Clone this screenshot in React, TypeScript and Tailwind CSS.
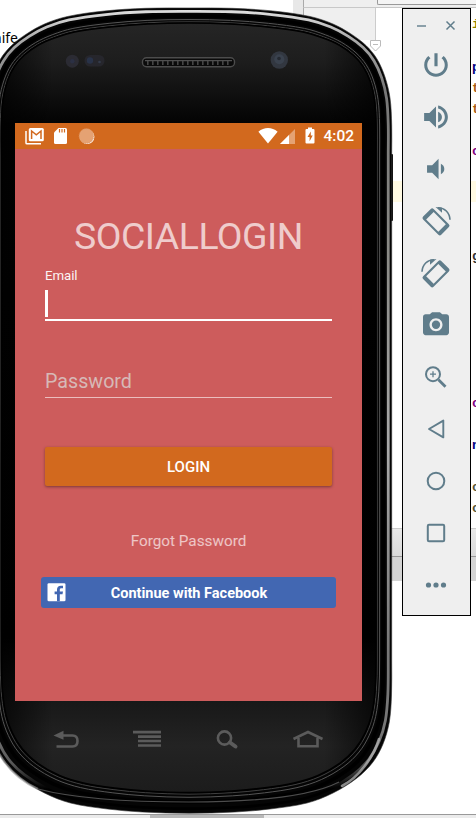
import React from "react";

type Pt = [number, number];

/* Right half of the case outline, from top centre to bottom centre. */
const OUTER: Pt[] = [
  [189, 8], [232, 8.3], [273, 11], [310, 16.5], [333, 24], [351, 34], [366, 45.5], [377, 59], [385, 77], [390, 98], [391.7, 125], [391.7, 155],
  [391.7, 400], [391.7, 660], [391.5, 695], [389.3, 722], [383, 744], [373, 762], [357, 778], [333, 793], [307, 803], [270, 809], [235, 812], [189, 813.3],
];
const INNER: Pt[] = [
  [189, 23], [230, 24], [267, 27], [303, 32], [323, 38], [339, 45], [353, 55], [363, 66.5], [370, 81], [374.5, 100], [376, 125], [376, 155],
  [376, 400], [376, 660], [375, 691], [371.5, 715], [365, 733], [355, 749], [340, 763], [318, 775.5], [294, 783], [263, 788], [232, 791], [189, 792.5],
];

/* Closed outline between the outer edge (t = 0) and the glass (t = 1). */
function ring(t: number) {
  const right: Pt[] = OUTER.map(([x, y], i) => [x + (INNER[i][0] - x) * t, y + (INNER[i][1] - y) * t]);
  const left: Pt[] = right.slice(1, -1).reverse().map(([x, y]) => [377.5 - x, y]);
  const p = [...right, ...left];
  const n = p.length;
  let d = `M${p[0][0]} ${p[0][1]}`;
  for (let i = 0; i < n; i++) {
    const a = p[(i + n - 1) % n], b = p[i], c = p[(i + 1) % n], e = p[(i + 2) % n];
    const len = Math.hypot(c[0] - b[0], c[1] - b[1]);
    const l1 = Math.hypot(c[0] - a[0], c[1] - a[1]);
    const l2 = Math.hypot(e[0] - b[0], e[1] - b[1]);
    const k = len / 3;
    d += `C${b[0] + ((c[0] - a[0]) / l1) * k} ${b[1] + ((c[1] - a[1]) / l1) * k} ${c[0] - ((e[0] - b[0]) / l2) * k} ${c[1] - ((e[1] - b[1]) / l2) * k} ${c[0]} ${c[1]}`;
  }
  return d + "Z";
}

function CaseArt() {
  return (
    <svg className="absolute left-0 top-0" width="396" height="818" viewBox="0 0 396 818" fill="none">
      <defs>
        <linearGradient id="face" x1="0" y1="24" x2="0" y2="792" gradientUnits="userSpaceOnUse">
          <stop offset="0" stopColor="#252525" /><stop offset=".05" stopColor="#1d1d1d" /><stop offset=".13" stopColor="#030303" />
          <stop offset=".8" stopColor="#000" /><stop offset=".88" stopColor="#181818" /><stop offset=".94" stopColor="#232323" /><stop offset="1" stopColor="#1c1c1c" />
        </linearGradient>
        <linearGradient id="rim" x1="0" y1="8" x2="0" y2="813" gradientUnits="userSpaceOnUse">
          <stop offset="0" stopColor="#e2e2e2" /><stop offset=".04" stopColor="#aaa" /><stop offset=".1" stopColor="#777" /><stop offset=".3" stopColor="#8a8a86" />
          <stop offset=".55" stopColor="#aaa" /><stop offset=".8" stopColor="#777" /><stop offset=".9" stopColor="#777" /><stop offset=".94" stopColor="#555" /><stop offset=".97" stopColor="#000" />
        </linearGradient>
        <linearGradient id="edge" x1="0" y1="0" x2="377" y2="0" gradientUnits="userSpaceOnUse">
          <stop offset="0" stopColor="#000" stopOpacity=".7" /><stop offset=".14" stopColor="#000" stopOpacity="0" /><stop offset=".86" stopColor="#000" stopOpacity="0" /><stop offset="1" stopColor="#000" stopOpacity=".7" />
        </linearGradient>
      </defs>
      <rect x="389" y="154" width="4" height="67" rx="1" fill="#111" />
      <path d={ring(0)} fill="#050505" stroke="#333" strokeWidth=".6" />
      <path d={ring(0.22)} stroke="url(#rim)" strokeWidth="2.8" />
      <path d={ring(0.54)} stroke="#000" strokeWidth="3.5" />
      <path d={ring(0.77)} stroke="#555" strokeWidth="1" />
      <path d={ring(0.92)} stroke="#404040" strokeWidth="1" />
      <path d={ring(1)} fill="url(#face)" stroke="#000" strokeWidth="1.5" />
      <path d={ring(1)} fill="url(#edge)" />
      <path d="M38 789C80 800 140 802 189 802C250 802 310 797 339 782" stroke="#808080" strokeWidth="1.2" opacity=".6" />
      <path d="M342 786C359 777 373 758 379 739" stroke="#b5b5b5" strokeWidth="2.6" strokeLinecap="round" opacity=".75" />
      <path d="M-4 748C5 766 18 780 38 789" stroke="#a0a0a0" strokeWidth="2.2" opacity=".65" />
      <circle cx="72.3" cy="61.2" r="6.5" fill="#2b2b33" />
      <circle cx="72.3" cy="61.2" r="2.2" fill="#2b3044" />
      <rect x="84.5" y="55" width="20" height="11.5" rx="5.5" fill="#26262c" />
      <circle cx="90" cy="60.5" r="3.2" fill="#283248" />
      <circle cx="99.5" cy="62" r="1.3" fill="#333a4a" />
      <rect x="142.5" y="57.8" width="92" height="9" rx="4" fill="#0a0a0a" stroke="#4c4c4c" strokeWidth="1.4" />
      <path d="M145 60.6H232" stroke="#505050" strokeWidth="1.4" />
      <path d="M147 63H231" stroke="#454545" strokeWidth="4" strokeDasharray="1.6 3.4" />
      <circle cx="279.3" cy="60" r="8.7" fill="#323740" />
      <circle cx="279.3" cy="59.3" r="5" fill="#3a424e" />
      <circle cx="279" cy="58.5" r="1.8" fill="#252a32" />
    </svg>
  );
}

function StatusBar() {
  return (
    <div className="flex h-[26px] items-center bg-[#d2691e] pl-[10px] pr-[8px] text-white">
      <svg width="20" height="18" viewBox="0 0 20 18" fill="none">
        <path d="M1 4V15.9Q1 16.7 2 16.7H16" stroke="#fff" strokeWidth="1.5" />
        <rect x="3.8" y="1" width="15" height="13.3" rx="1.5" fill="#fff" />
        <path d="M6.6 12V4L11.3 7.8L16 4V12" stroke="#d2691e" strokeWidth="1.5" />
      </svg>
      <svg className="ml-[9px]" width="14" height="18" viewBox="0 0 14 18">
        <path d="M4.5 1H11.5Q13 1 13 2.5V15.5Q13 17 11.5 17H1.5Q0 17 0 15.5V5.5Z" fill="#fff" />
        <path d="M5.5 2V5.5M8 2V5.5M10.5 2V5.5" stroke="#d2691e" strokeWidth="1.2" />
      </svg>
      <svg className="ml-[10px]" width="18" height="18" viewBox="0 0 18 18">
        <circle cx="9.2" cy="9.8" r="7.2" fill="#fff" />
        <circle cx="8.4" cy="9" r="7.4" fill="#e5a273" stroke="#d88c55" strokeWidth=".7" strokeDasharray="1 1" />
      </svg>
      <svg className="ml-auto" width="20" height="18" viewBox="0 0 20 18">
        <path d="M.4 4.7C6-.1 14-.1 19.6 4.7L10 16.5Z" fill="#fff" />
      </svg>
      <svg className="ml-[1px]" width="17" height="18" viewBox="0 0 17 18">
        <path d="M1 17L16 2V17Z" fill="#e5a273" />
        <path d="M1 17L10 8V17Z" fill="#fff" />
      </svg>
      <svg className="ml-[9px]" width="10" height="18" viewBox="0 0 10 18">
        <path d="M3 .5H7V2H8.3Q9.5 2 9.5 3V15.5Q9.5 16.5 8.5 16.5H1.5Q.5 16.5 .5 15.5V3Q.5 2 1.7 2H3Z" fill="#fff" />
        <path d="M5.8 4.5L2.5 10H4.6V14.2L7.7 8.5H5.8Z" fill="#d2691e" />
      </svg>
      <span className="ml-[8px] pt-[2px] text-[15.5px] font-medium leading-none">4:02</span>
    </div>
  );
}

function Screen() {
  return (
    <div className="relative ml-[15px] mt-[123px] flex h-[578px] w-[347px] flex-col bg-[#cd5c5c]">
      <StatusBar />
      <div className="flex flex-col px-[30px] pt-[65px]">
        <h1 className="text-center text-[37.4px] leading-[44px] tracking-[-0.5px] text-white/70">SOCIALLOGIN</h1>
        <label className="mt-[10px] text-[13.3px] leading-4 tracking-[-0.1px] text-white/95">Email</label>
        <div className="mt-[6px] h-[31px] border-b-2 border-white">
          <div className="h-[27px] w-[2.5px] bg-white" />
        </div>
        <div className="mt-[47px] h-[30px] border-b border-white/60 text-[19.7px] leading-[27px] text-[#d7b9b7]">Password</div>
        <button className="mt-[49px] h-[39px] rounded-[2px] bg-[#d2691e] pt-[2px] text-[15px] font-medium text-white shadow-[0_1px_3px_rgba(0,0,0,0.4)]">LOGIN</button>
        <div className="mt-[44px] text-center text-[15.3px] leading-[22px] text-white/65">Forgot Password</div>
        <button className="-mx-1 mt-[25px] flex h-[31px] items-center rounded-[3px] bg-[#4267b2] pl-[6px] text-[14.5px] font-bold text-white">
          <svg width="19" height="19" viewBox="0 0 19 19">
            <rect x=".5" y=".2" width="18" height="18" rx="1.3" fill="#fff" />
            <path d="M10 18.2V11.2H7.6V8.4H10V6.5C10 4 11.5 2.7 13.7 2.7H16V5.3H14.4C13.2 5.3 12.8 5.9 12.8 6.9V8.4H16L15.5 11.2H12.8V18.2Z" fill="#4267b2" />
          </svg>
          <span className="flex-1 pr-[24px] pt-[2px] text-center">Continue with Facebook</span>
        </button>
      </div>
    </div>
  );
}

function HardwareKeys() {
  return (
    <div className="relative ml-[52px] mt-[28px] flex w-[272px] items-center justify-between text-[#5b5b5b]">
      <svg width="28" height="22" viewBox="0 0 28 22" fill="none" stroke="currentColor" strokeWidth="2.6">
        <path d="M10 6.5H20.5Q25.5 6.5 25.5 12T20.5 17.5H4.5" /><path d="M1.5 6.5L11.5 1.8V10.8Z" fill="currentColor" stroke="none" />
      </svg>
      <svg width="30" height="22" viewBox="0 0 30 22" fill="none" stroke="currentColor" strokeWidth="2.6">
        <path d="M0 3.1H28M5 7.6H28M5 12H28M5 16.5H28" />
      </svg>
      <svg width="24" height="22" viewBox="0 0 24 22" fill="none" stroke="currentColor">
        <circle cx="9.5" cy="9" r="6.6" strokeWidth="2.6" /><path d="M15 13.5L20.5 17.5" strokeWidth="4" strokeLinecap="round" />
      </svg>
      <svg width="32" height="22" viewBox="0 0 32 22" fill="none" stroke="currentColor" strokeWidth="2.6">
        <path d="M1.5 10L16 3L30.5 10" /><path d="M6.5 9V17.3H25.5V9" />
      </svg>
    </div>
  );
}

function Emulator() {
  return (
    <div className="absolute left-0 top-0 flex h-[818px] w-[396px] flex-col">
      <CaseArt />
      <Screen />
      <HardwareKeys />
    </div>
  );
}

function RotateArt() {
  return (
    <g>
      <path transform="translate(0 .8) rotate(45)" fillRule="evenodd" d="M-10.8 -7.4H10.8Q12.8 -7.4 12.8 -5.4V5.4Q12.8 7.4 10.8 7.4H-10.8Q-12.8 7.4 -12.8 5.4V-5.4Q-12.8 -7.4 -10.8 -7.4ZM-8.6 -5.3V5.3H8.6V-5.3Z" />
      <path d="M2 -13.3C8.5 -13.5 13.7 -8.2 14 -1.2" fill="none" stroke="currentColor" strokeWidth="1.6" />
      <path d="M-.5 -14L6 -13.2L6 -8.2Z" />
    </g>
  );
}

const TOOLS: { name: string; art: React.ReactNode }[] = [
  { name: "Power", art: <g transform="scale(1.31) translate(-12 -12)"><path d="M13.2 3h-2.4v10h2.4V3zm4.63 2.17-1.6 1.6C17.8 8 18.7 9.81 18.7 12c0 3.7-3 6.7-6.7 6.7s-6.7-3-6.7-6.7c0-2.19.95-4 2.48-5.22L6.17 5.17C4.23 6.82 3 9.26 3 12c0 4.97 4.03 9 9 9s9-4.03 9-9c0-2.74-1.23-5.18-3.17-6.83z" /></g> },
  { name: "Volume up", art: <g transform="scale(1.32) translate(-12 -12)"><path d="M3 9v6h4l5 5V4L7 9H3zm13.5 3c0-1.77-1.02-3.29-2.9-4.03v8.05c1.88-.73 2.9-2.25 2.9-4.02zM13.6 3.23v2.4c2.89.7 5.1 3.2 5.1 6.37s-2.21 5.67-5.1 6.37v2.4c4.21-.91 7.4-4.49 7.4-8.77s-3.19-7.86-7.4-8.77z" /></g> },
  { name: "Volume down", art: <g transform="scale(1.28) translate(-12 -12)"><path d="M18.5 12c0-1.77-1.02-3.29-2.7-4.03v8.05c1.68-.73 2.7-2.25 2.7-4.02zM5 9v6h4l5 5V4L9 9H5z" /></g> },
  { name: "Rotate left", art: <RotateArt /> },
  { name: "Rotate right", art: <g transform="scale(-1 1)"><RotateArt /></g> },
  { name: "Screenshot", art: <g transform="scale(1.3) translate(-12 -12.2)"><path fillRule="evenodd" d="M9 2.4L7.17 4H4c-1.1 0-2 .9-2 2v12c0 1.1.9 2 2 2h16c1.1 0 2-.9 2-2V6c0-1.1-.9-2-2-2h-3.17L15 2.4H9zm3 14.6c-2.76 0-5-2.24-5-5s2.24-5 5-5 5 2.24 5 5-2.24 5-5 5z" /><circle cx="12" cy="12" r="3.2" /></g> },
  { name: "Zoom", art: <g fill="none" stroke="currentColor"><circle cx="-3" cy="-2.8" r="7" strokeWidth="2" /><path d="M2.5 2.7L9.5 9.7" strokeWidth="2.8" /><path d="M-6 -2.8H0M-3 -5.8V.2" strokeWidth="1.3" /></g> },
  { name: "Back", art: <path d="M-7 0L7.3 -8.4V8.4Z" fill="none" stroke="currentColor" strokeWidth="1.9" strokeLinejoin="round" /> },
  { name: "Home", art: <circle r="8.3" fill="none" stroke="currentColor" strokeWidth="2" /> },
  { name: "Overview", art: <rect x="-8.2" y="-8.2" width="16.4" height="16.4" rx="1.2" fill="none" stroke="currentColor" strokeWidth="2" /> },
  { name: "More", art: <g><circle cx="-7.5" r="2.6" /><circle r="2.6" /><circle cx="7.5" r="2.6" /></g> },
];

function Toolbar() {
  return (
    <div className="absolute left-[402px] top-[8px] flex h-[608px] w-[69px] flex-col items-center border border-black bg-[#efefef] text-[#607d8b]">
      <div className="flex h-[30px] w-full items-center justify-between pl-[13px] pr-[14px] pt-[3px]">
        <svg width="11" height="10" viewBox="0 0 11 10" stroke="currentColor" strokeWidth="1.4"><path d="M1 5H10" /></svg>
        <svg width="11" height="11" viewBox="0 0 11 11" stroke="currentColor" strokeWidth="1.5"><path d="M1.5 1.5L9.5 9.5M9.5 1.5L1.5 9.5" /></svg>
      </div>
      {TOOLS.map((tool) => (
        <button key={tool.name} aria-label={tool.name} className="flex h-[52px] shrink-0 items-center justify-center pr-px">
          <svg width="34" height="34" viewBox="-17 -17 34 34" fill="currentColor">{tool.art}</svg>
        </button>
      ))}
    </div>
  );
}

const CODE: { top: number; text: string; color: string }[] = [
  { top: 16, text: "i", color: "#8a8200" },
  { top: 59, text: "p", color: "#000080" },
  { top: 80, text: "t", color: "#a85b10" },
  { top: 101, text: "t", color: "#a85b10" },
  { top: 143, text: "c", color: "#800080" },
  { top: 248, text: "g", color: "#333" },
  { top: 395, text: "c", color: "#800080" },
  { top: 437, text: "n", color: "#000080" },
  { top: 479, text: "c", color: "#555533" },
  { top: 500, text: "c", color: "#555533" },
];

function Editor() {
  return (
    <div className="flex h-full flex-col">
      <div className="flex h-[8px] justify-end">
        <div className="w-[10px] bg-[#e8e8e8]" />
        <div className="flex w-[173px] justify-end border-b border-l border-b-[#c8c8c8] border-l-[#aaa] bg-[#efefef]">
          <div className="h-[5px] w-[99px] rounded-bl-[2px] border-b border-l border-[#999] bg-[#f4f4f4]" />
        </div>
      </div>
      <div className="flex h-[520px]">
        <div className="w-[293px] pt-[19px] font-['Noto_Sans'] text-[14px] text-black"><span className="-ml-[7px]">nife</span></div>
        <div className="h-[50px] w-[10px] bg-[#e8e8e8]" />
        <div className="h-[32px] w-[73px] border-l border-r border-l-[#aaa] border-r-[#ccc] bg-[#efefef]" />
        <div className="mt-[173px] h-[21px] flex-1 bg-[#fffae3]" />
      </div>
      <div className="ml-[380px] h-[29px] border-y border-b-[#999] border-t-[#ccc] bg-linear-to-b from-[#e9e9e9] to-[#dadada]" />
      <div className="ml-[380px] h-[24px] bg-[#d4d4d4]" />
      <div className="mt-auto flex h-[4px] border-t border-[#999] bg-[#ebebeb]">
        <div className="ml-[150px] w-[114px] bg-[#b8b8b8]" />
      </div>
      <svg className="absolute left-[369px] top-[39px]" width="13" height="14" viewBox="0 0 13 14" fill="#fff" stroke="#bbb">
        <path d="M1.5 1.5H11.5V7L6.5 12L1.5 7Z" /><path d="M4 5.5H9" />
      </svg>
      {CODE.map((c) => (
        <span key={c.top} className="absolute left-[472px] font-['Liberation_Mono'] text-[13px] font-bold leading-[18px]" style={{ top: c.top, color: c.color }}>{c.text}</span>
      ))}
    </div>
  );
}

export default function App() {
  return (
    <div className="relative h-[818px] w-[476px] overflow-hidden bg-white font-[Roboto,sans-serif]">
      <Editor />
      <Emulator />
      <Toolbar />
    </div>
  );
}
